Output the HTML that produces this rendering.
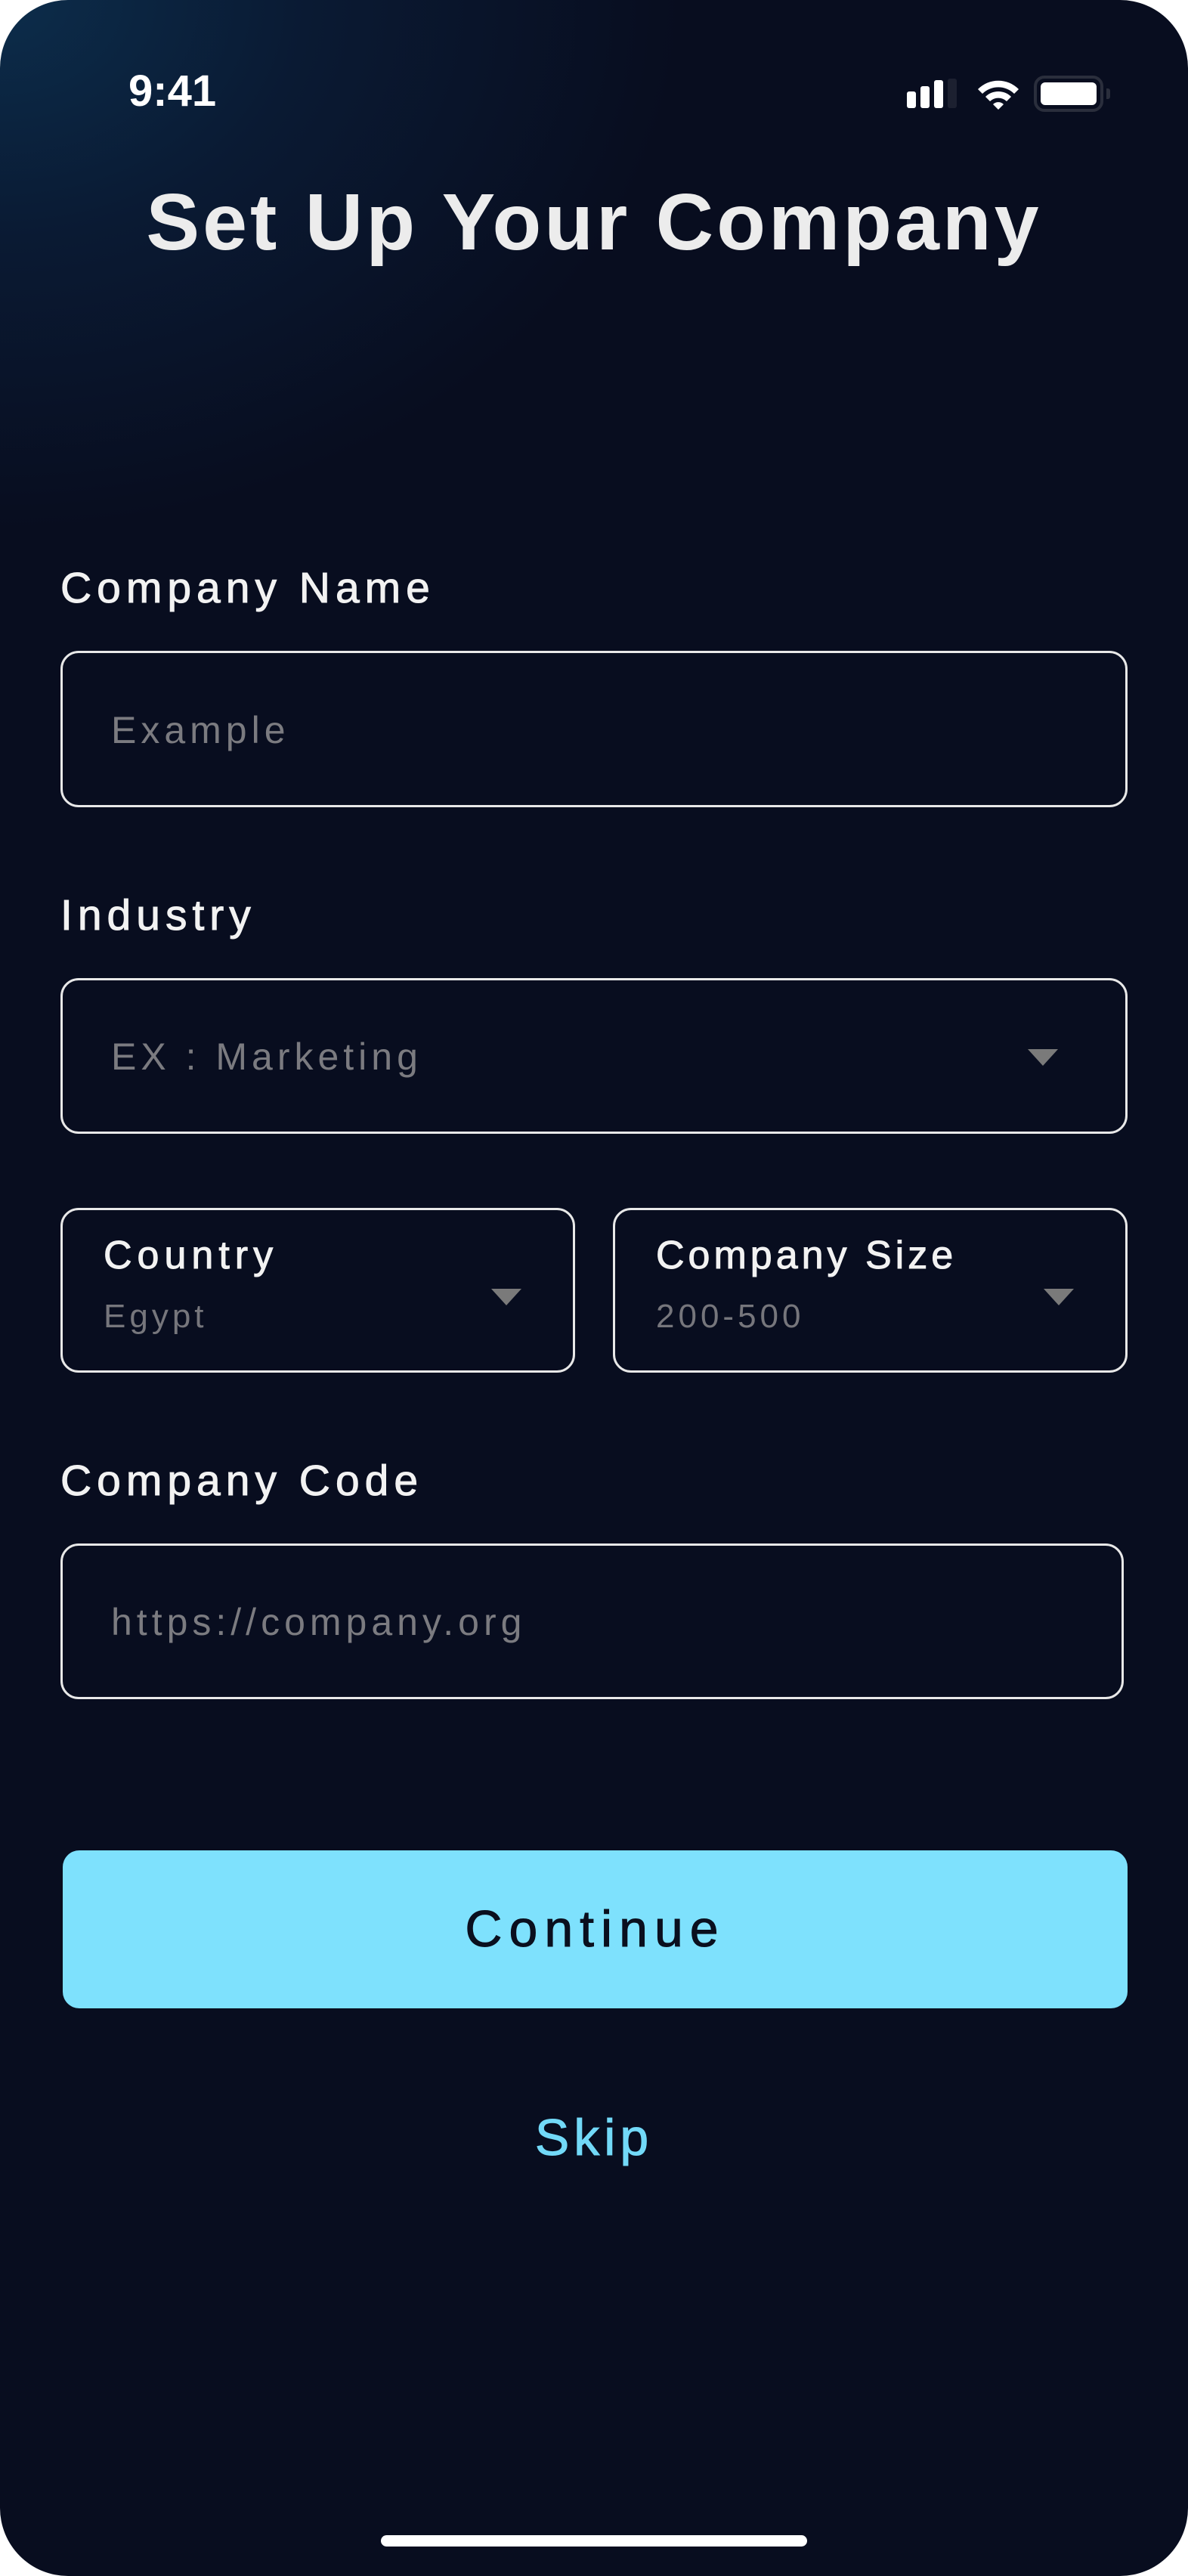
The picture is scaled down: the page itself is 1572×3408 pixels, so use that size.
<!DOCTYPE html>
<html><head><meta charset="utf-8"><style>
html,body{margin:0;padding:0;background:#fff}
.ph{position:relative;width:1572px;height:3408px;border-radius:90px;overflow:hidden;background:#080d1f;
background-image:radial-gradient(ellipse 900px 700px at 0 0,#0c2d4b 0%,#0a1a33 45%,rgba(8,13,31,0) 100%);font-family:"Liberation Sans",sans-serif;color:#f0f0f0}
.a{position:absolute}
.lbl{font-size:57px;left:80px;line-height:1;color:#f2f2f2;letter-spacing:7px;-webkit-text-stroke:1px #f2f2f2}
.box{position:absolute;border:3px solid #e8e8e8;border-radius:24px;box-sizing:border-box}
.ph1{position:absolute;left:64px;font-size:50px;color:#7b7b80;line-height:1;letter-spacing:6px}
.tri{position:absolute;width:0;height:0;border-left:20px solid transparent;border-right:20px solid transparent;border-top:22px solid #7a7a7a}
</style></head><body><div class="ph">
<div class="a" style="left:170px;top:92px;font-size:58px;font-weight:bold;color:#fff;line-height:1">9:41</div>
<div class="a" style="left:1200px;top:121px;width:12px;height:22px;background:#fff;border-radius:3px"></div>
<div class="a" style="left:1218px;top:114px;width:12px;height:29px;background:#fff;border-radius:3px"></div>
<div class="a" style="left:1236px;top:106px;width:12px;height:37px;background:#fff;border-radius:3px"></div>
<div class="a" style="left:1254px;top:104px;width:12px;height:39px;background:#1c2030;border-radius:3px"></div>
<svg class="a" style="left:1290px;top:104px" width="62" height="42" viewBox="0 0 62 42"><path d="M4 14 A38 38 0 0 1 58 14 L52 20 A30 30 0 0 0 10 20Z M14 24 A24 24 0 0 1 48 24 L42 30 A16 16 0 0 0 20 30Z M24 34 A10 10 0 0 1 38 34 L31 41Z" fill="#fff"/></svg>
<div class="a" style="left:1368px;top:100px;width:92px;height:48px;border:4px solid #2a2e3c;border-radius:14px;box-sizing:border-box"></div>
<div class="a" style="left:1377px;top:109px;width:74px;height:30px;background:#fff;border-radius:6px"></div>
<div class="a" style="left:1464px;top:117px;width:5px;height:14px;background:#2a2e3c;border-radius:0 3px 3px 0"></div>
<div class="a" style="left:0;width:1572px;top:241px;text-align:center;font-size:106px;font-weight:bold;line-height:1;color:#ececec;letter-spacing:4px">Set Up Your Company</div>
<div class="a lbl" style="top:750px">Company Name</div>
<div class="box" style="left:80px;top:861px;width:1412px;height:207px"><div class="ph1" style="top:77px">Example</div></div>
<div class="a lbl" style="top:1183px">Industry</div>
<div class="box" style="left:80px;top:1294px;width:1412px;height:206px"><div class="ph1" style="top:76px">EX : Marketing</div><div class="tri" style="left:1277px;top:91px"></div></div>
<div class="box" style="left:80px;top:1598px;width:681px;height:218px"><div class="a" style="left:54px;top:30px;font-size:52px;color:#f2f2f2;letter-spacing:7px;-webkit-text-stroke:1px #f2f2f2">Country</div><div class="a" style="left:54px;top:116px;font-size:44px;color:#76767c;letter-spacing:5px">Egypt</div><div class="tri" style="left:567px;top:104px"></div></div>
<div class="box" style="left:811px;top:1598px;width:681px;height:218px"><div class="a" style="left:54px;top:30px;font-size:52px;color:#f2f2f2;letter-spacing:5px;-webkit-text-stroke:1px #f2f2f2">Company Size</div><div class="a" style="left:54px;top:116px;font-size:44px;color:#76767c;letter-spacing:5px">200-500</div><div class="tri" style="left:567px;top:104px"></div></div>
<div class="a lbl" style="top:1931px">Company Code</div>
<div class="box" style="left:80px;top:2042px;width:1407px;height:206px"><div class="ph1" style="top:76px">https://company.org</div></div>
<div class="a" style="left:83px;top:2448px;width:1409px;height:209px;background:#7ee1fd;border-radius:22px;text-align:center;line-height:209px;font-size:68px;color:#0a0f1e;letter-spacing:9px;-webkit-text-stroke:1px #0a0f1e">Continue</div>
<div class="a" style="left:0;width:1572px;top:2794px;text-align:center;font-size:68px;color:#72d9f8;line-height:1;letter-spacing:6px;-webkit-text-stroke:1px #72d9f8">Skip</div>
<div class="a" style="left:504px;top:3354px;width:564px;height:15px;background:#fff;border-radius:8px"></div>
</div></body></html>
